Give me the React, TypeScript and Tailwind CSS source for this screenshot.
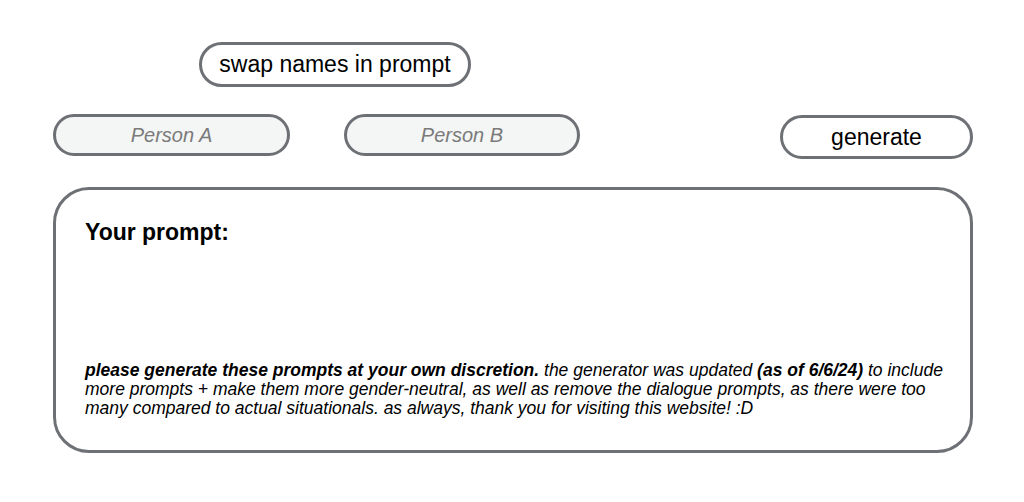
export default function App() {
  return (
    <div className="min-h-screen bg-white font-['Liberation_Sans',Arial,sans-serif] text-black">
      <div className="w-[920px] ml-[53px] pt-[42px]">
        <div className="flex">
          <button className="ml-[146px] h-[45px] w-[272px] rounded-full border-[3px] border-[#6d7075] bg-white text-[23px]">
            swap names in prompt
          </button>
        </div>
        <div className="mt-[27px] flex items-start">
          <input
            placeholder="Person A"
            className="h-[42px] w-[237px] rounded-full border-[3px] border-[#6d7075] bg-[#f4f5f5] text-center text-[20px] italic placeholder:text-[#7a7a7a] outline-none"
          />
          <input
            placeholder="Person B"
            className="ml-[54px] h-[42px] w-[236px] rounded-full border-[3px] border-[#6d7075] bg-[#f4f5f5] text-center text-[20px] italic placeholder:text-[#7a7a7a] outline-none"
          />
          <button className="ml-auto mt-px h-[44px] w-[193px] rounded-full border-[3px] border-[#6d7075] bg-white text-[23px]">
            generate
          </button>
        </div>
        <div className="mt-[28px] h-[266px] rounded-[36px] border-[3px] border-[#6d7075] pl-[29px] pr-[22px] pt-[29px]">
          <h2 className="text-[23px] font-bold leading-[26px]">Your prompt:</h2>
          <p className="mt-[116px] text-[17.5px] italic leading-[19px]">
            <b>please generate these prompts at your own discretion.</b> the generator was updated{" "}
            <b>(as of 6/6/24)</b> to include more prompts + make them more gender-neutral, as well as remove the
            dialogue prompts, as there were too many compared to actual situationals. as always, thank you for
            visiting this website! :D
          </p>
        </div>
      </div>
    </div>
  );
}
